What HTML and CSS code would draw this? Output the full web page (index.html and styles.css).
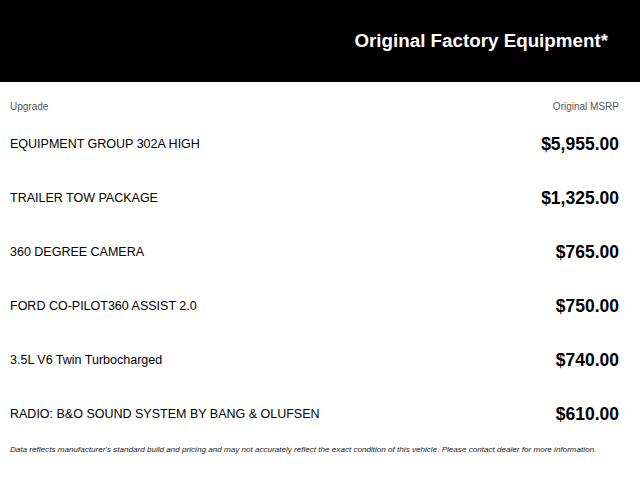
FILE: index.html
```html
<!DOCTYPE html>
<html>
<head>
<meta charset="utf-8">
<link rel="stylesheet" href="styles.css">
</head>
<body>
<header class="banner">
  <h1 class="title">Original Factory Equipment*</h1>
</header>
<main class="table">
  <div class="head-row">
    <span>Upgrade</span>
    <span>Original MSRP</span>
  </div>
  <div class="row"><span class="label">EQUIPMENT GROUP 302A HIGH</span><span class="price">$5,955.00</span></div>
  <div class="row"><span class="label">TRAILER TOW PACKAGE</span><span class="price">$1,325.00</span></div>
  <div class="row"><span class="label">360 DEGREE CAMERA</span><span class="price">$765.00</span></div>
  <div class="row"><span class="label">FORD CO-PILOT360 ASSIST 2.0</span><span class="price">$750.00</span></div>
  <div class="row"><span class="label">3.5L V6 Twin Turbocharged</span><span class="price">$740.00</span></div>
  <div class="row"><span class="label">RADIO: B&amp;O SOUND SYSTEM BY BANG &amp; OLUFSEN</span><span class="price">$610.00</span></div>
  <p class="note">Data reflects manufacturer's standard build and pricing and may not accurately reflect the exact condition of this vehicle. Please contact dealer for more information.</p>
</main>
</body>
</html>
```

FILE: styles.css
```css
html, body {
  margin: 0;
  padding: 0;
  background: #fff;
  font-family: "Liberation Sans", Arial, sans-serif;
  color: #000;
}
.banner {
  background: #000;
  height: 82px;
  display: flex;
  align-items: center;
  justify-content: flex-end;
  padding-right: 32px;
}
.title {
  margin: 0;
  color: #fff;
  font-size: 18.8px;
  font-weight: bold;
  line-height: 22px;
}
.table {
  padding: 0 21px 0 10px;
}
.head-row {
  display: flex;
  justify-content: space-between;
  font-size: 10px;
  line-height: 14px;
  color: #555;
  padding-top: 18px;
  height: 17px;
}
.row {
  display: flex;
  justify-content: space-between;
  align-items: center;
  height: 54px;
}
.label {
  font-size: 12.5px;
}
.price {
  font-size: 17.5px;
  font-weight: bold;
}
.note {
  margin: 0;
  padding-top: 3px;
  font-size: 8.1px;
  line-height: 11px;
  font-style: italic;
  color: #222;
}
```
